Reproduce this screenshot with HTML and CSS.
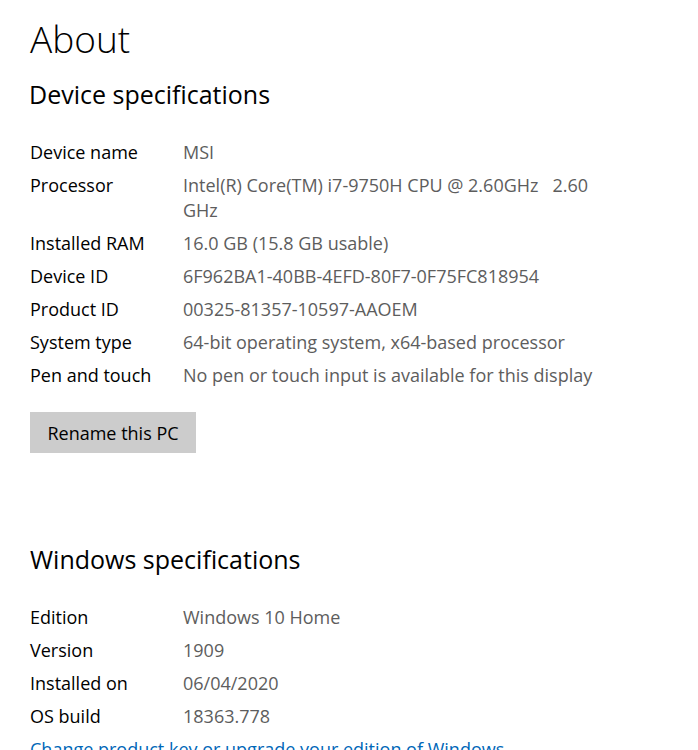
FILE: index.html
```html
<!DOCTYPE html>
<html>
<head lang="en">
    <meta charset="UTF-8">
    <title>About</title>
    <link rel="stylesheet" href="styles.css">
</head>
<body>
<div id="page">
    <h1 class="title">About</h1>
    <h2 class="heading">Device specifications</h2>
    <dl class="specs">
        <dt>Device name</dt><dd>MSI</dd>
        <dt>Processor</dt><dd>Intel(R) Core(TM) i7-9750H CPU @ 2.60GHz&nbsp;&nbsp; 2.60 GHz</dd>
        <dt>Installed RAM</dt><dd>16.0 GB (15.8 GB usable)</dd>
        <dt>Device ID</dt><dd>6F962BA1-40BB-4EFD-80F7-0F75FC818954</dd>
        <dt>Product ID</dt><dd>00325-81357-10597-AAOEM</dd>
        <dt>System type</dt><dd>64-bit operating system, x64-based processor</dd>
        <dt>Pen and touch</dt><dd>No pen or touch input is available for this display</dd>
    </dl>
    <button class="btn">Rename this PC</button>

    <h2 class="heading win">Windows specifications</h2>
    <dl class="specs">
        <dt>Edition</dt><dd>Windows 10 Home</dd>
        <dt>Version</dt><dd>1909</dd>
        <dt>Installed on</dt><dd>06/04/2020</dd>
        <dt>OS build</dt><dd>18363.778</dd>
    </dl>
    <a href="#" class="link">Change product key or upgrade your edition of Windows</a>
</div>
</body>
</html>
```

FILE: styles.css
```css
body, h1, h2, dl, dt, dd {
    margin: 0;
    padding: 0;
}

body {
    font-family: "Open Sans", "Noto Sans", sans-serif;
    background: #fff;
    color: #000;
}

#page {
    padding: 15px 0 0 30px;
}

.title {
    font-size: 37px;
    font-weight: 300;
    line-height: 48px;
}

.heading {
    font-size: 25px;
    font-weight: 400;
    line-height: 32px;
    margin: 15px 0 0 -1px;
}

.heading.win {
    margin: 90px 0 0 0;
}

.specs {
    display: grid;
    grid-template-columns: 153px 420px;
    row-gap: 8px;
    margin-top: 30px;
    font-size: 18px;
    line-height: 25px;
}

.specs dd {
    color: #5d5d5d;
}

.btn {
    margin-top: 24px;
    width: 166px;
    height: 41px;
    border: none;
    background: #cccccc;
    font-family: inherit;
    font-size: 18px;
    color: #000;
    padding: 0;
}

.link {
    display: block;
    margin-top: 8px;
    font-size: 18px;
    line-height: 25px;
    color: #0067b8;
    text-decoration: none;
}
```
